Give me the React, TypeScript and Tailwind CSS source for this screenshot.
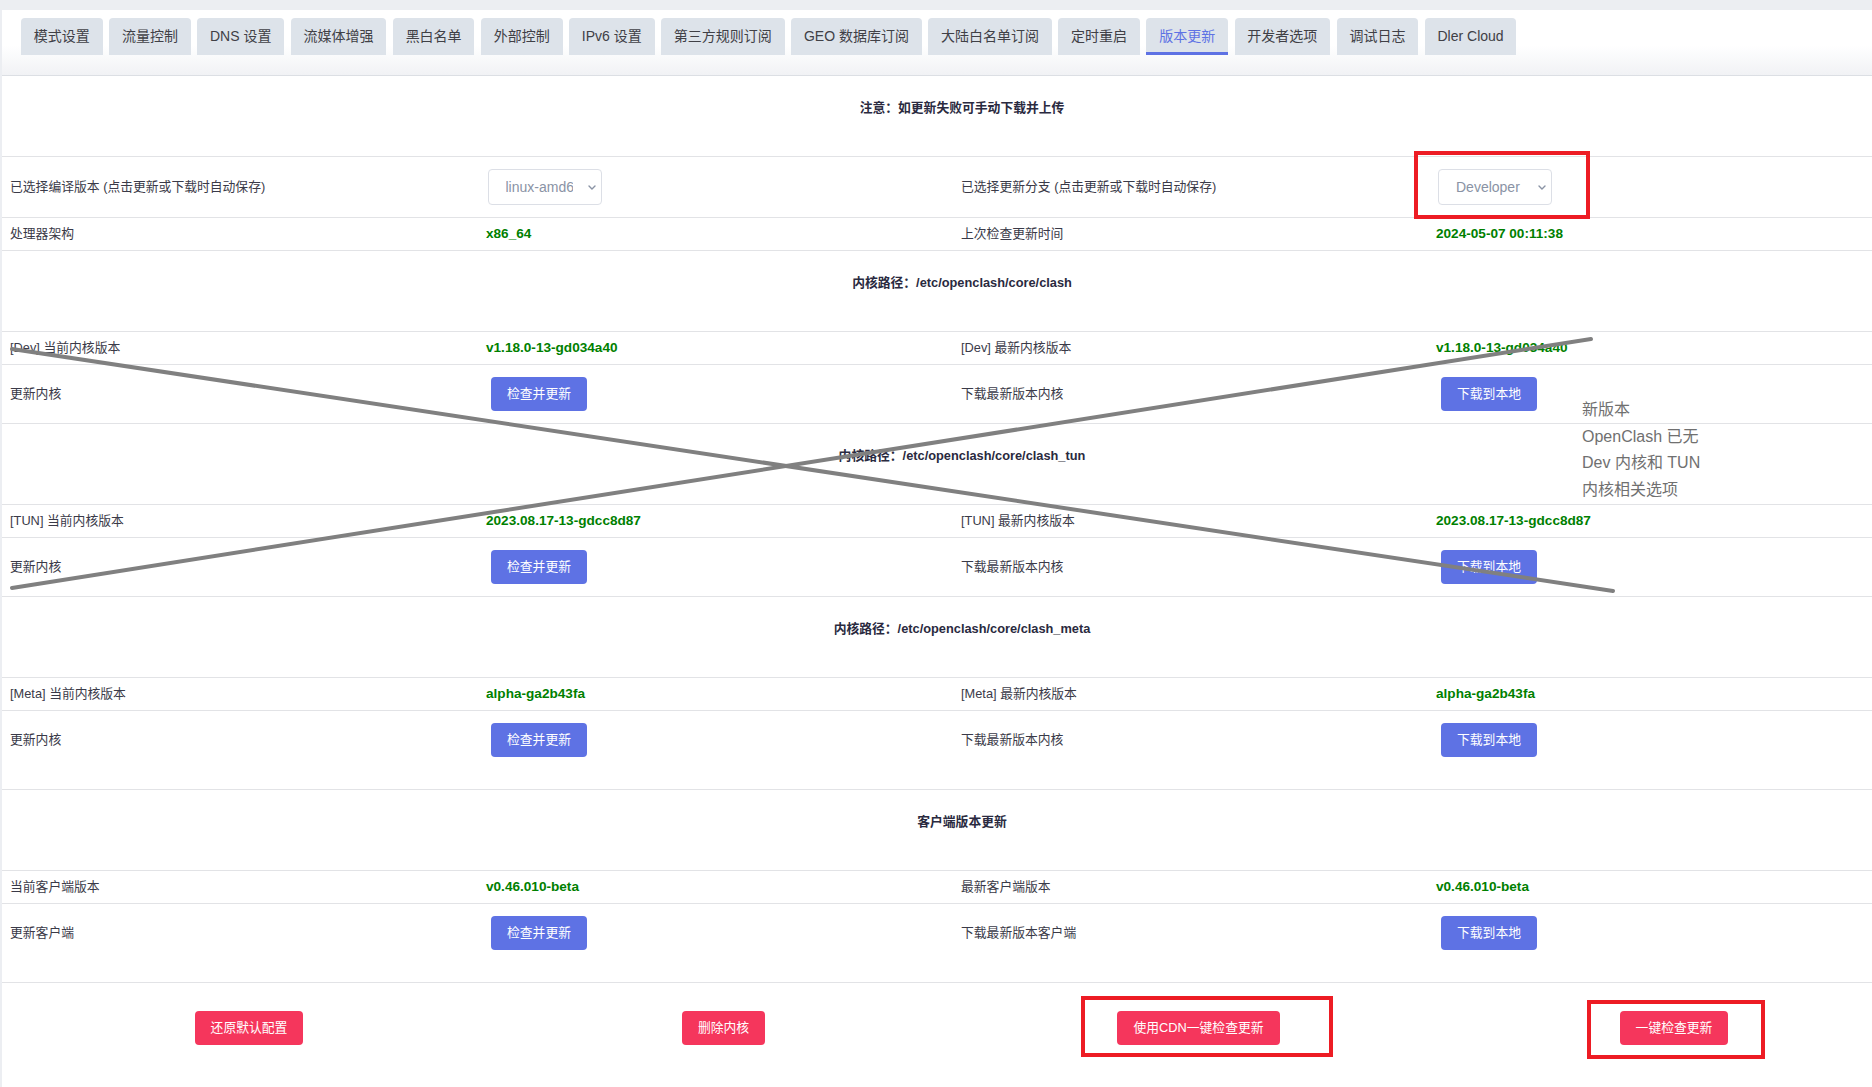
import type { ReactNode } from "react"
import clsx from "clsx"

const TABS = [
  "模式设置",
  "流量控制",
  "DNS 设置",
  "流媒体增强",
  "黑白名单",
  "外部控制",
  "IPv6 设置",
  "第三方规则订阅",
  "GEO 数据库订阅",
  "大陆白名单订阅",
  "定时重启",
  "版本更新",
  "开发者选项",
  "调试日志",
  "Dler Cloud",
]
const ACTIVE = "版本更新"

const COLS = "grid grid-cols-[474px_475px_475px_476px] border-b border-[#e2e3e6]"

function Label({ children }: { children: ReactNode }) {
  return <span className="text-[12.8px] text-[#3a3a48] whitespace-nowrap">{children}</span>
}

function Value({ children }: { children: ReactNode }) {
  return <span className="text-[13.6px] font-bold text-[#008000] whitespace-nowrap">{children}</span>
}

function Btn({ children, red }: { children: ReactNode; red?: boolean }) {
  return (
    <button
      className={clsx(
        "h-[34px] px-[16px] rounded-[4px] text-white text-[12.8px] whitespace-nowrap",
        red ? "bg-[#f5365c]" : "ml-[5px] bg-[#5e72e4]"
      )}
    >
      {children}
    </button>
  )
}

function FakeSelect({ text, className }: { text: string; className?: string }) {
  return (
    <div
      className={clsx(
        "w-[114px] h-[36px] border border-[#dcdfe6] rounded-[4px] bg-white flex items-center pl-[17px] pr-[5px] text-[14px] text-[#8a93a5]",
        className
      )}
    >
      <span className="w-[67px] overflow-hidden whitespace-nowrap">{text}</span>
      <svg width="8" height="5" viewBox="0 0 8 5" className="ml-auto">
        <path d="M1 1l3 3 3-3" fill="none" stroke="#8a93a5" strokeWidth="1.4" strokeLinecap="round" />
      </svg>
    </div>
  )
}

function Header({ children }: { children: ReactNode }) {
  return (
    <div className="h-[81px] border-b border-[#e2e3e6] pl-[20px] pt-[23px] text-center text-[12.8px] leading-[18px] font-bold text-[#2a2a40]">
      {children}
    </div>
  )
}

// plain label / value row
function Row({ cells, h = "h-[33px]" }: { cells: ReactNode[]; h?: string }) {
  return (
    <div className={clsx(COLS, h)}>
      {cells.map((c, i) => (
        <div key={i} className={clsx("flex items-center", i === 0 ? "pl-[8px]" : "pl-[10px]")}>
          {c}
        </div>
      ))}
    </div>
  )
}

// row with buttons, aligned to the top
function BtnRow({ cells, h }: { cells: ReactNode[]; h: string }) {
  return (
    <div className={clsx(COLS, h)}>
      {cells.map((c, i) => (
        <div key={i} className={clsx("pt-[12px]", i === 0 ? "pl-[8px]" : "pl-[10px]")}>
          <div className="h-[34px] flex items-center">{c}</div>
        </div>
      ))}
    </div>
  )
}

function KernelBlock({ tag, path, cur, latest, h }: { tag: string; path: string; cur: string; latest: string; h: string }) {
  return (
    <>
      <Header>内核路径：{path}</Header>
      <Row
        cells={[
          <Label>[{tag}] 当前内核版本</Label>,
          <Value>{cur}</Value>,
          <Label>[{tag}] 最新内核版本</Label>,
          <Value>{latest}</Value>,
        ]}
      />
      <BtnRow
        h={h}
        cells={[
          <Label>更新内核</Label>,
          <Btn>检查并更新</Btn>,
          <Label>下载最新版本内核</Label>,
          <Btn>下载到本地</Btn>,
        ]}
      />
    </>
  )
}

export default function App() {
  return (
    <div className="relative w-[1872px] h-[1087px] overflow-hidden bg-[#eceef2] pt-[10px] pl-[2px] font-['Liberation_Sans','Noto_Sans_CJK_SC',sans-serif]">
      <div className="w-[1900px] h-full bg-white rounded-tl-[5px]">
        {/* Tabs */}
        <div className="h-[66px] border-b border-[#dcdfe4] bg-linear-to-b from-white from-55% to-[#f1f2f5] pl-[19px] pt-[8px] flex items-start gap-[6.5px]">
          {TABS.map((t) => (
            <div
              key={t}
              className={clsx(
                "h-[37px] px-[12.8px] flex items-center rounded-t-[4px] bg-[#dde3ea] text-[14px] whitespace-nowrap",
                t === ACTIVE ? "text-[#5e72e4] border-b-[3px] border-[#5e72e4] pt-[3px]" : "text-[#404046]"
              )}
            >
              {t}
            </div>
          ))}
        </div>

        <Header>注意：如更新失败可手动下载并上传</Header>
        <Row
          h="h-[61px]"
          cells={[
            <Label>已选择编译版本 (点击更新或下载时自动保存)</Label>,
            <FakeSelect text="linux-amd64" className="ml-[1.5px]" />,
            <Label>已选择更新分支 (点击更新或下载时自动保存)</Label>,
            <FakeSelect text="Developer" className="ml-[2px]" />,
          ]}
        />
        <Row
          cells={[
            <Label>处理器架构</Label>,
            <Value>x86_64</Value>,
            <Label>上次检查更新时间</Label>,
            <Value>2024-05-07 00:11:38</Value>,
          ]}
        />

        <KernelBlock tag="Dev" path="/etc/openclash/core/clash" cur="v1.18.0-13-gd034a40" latest="v1.18.0-13-gd034a40" h="h-[59px]" />
        <KernelBlock tag="TUN" path="/etc/openclash/core/clash_tun" cur="2023.08.17-13-gdcc8d87" latest="2023.08.17-13-gdcc8d87" h="h-[59px]" />
        <KernelBlock tag="Meta" path="/etc/openclash/core/clash_meta" cur="alpha-ga2b43fa" latest="alpha-ga2b43fa" h="h-[79px]" />

        <Header>客户端版本更新</Header>
        <Row
          cells={[
            <Label>当前客户端版本</Label>,
            <Value>v0.46.010-beta</Value>,
            <Label>最新客户端版本</Label>,
            <Value>v0.46.010-beta</Value>,
          ]}
        />
        <BtnRow
          h="h-[79px]"
          cells={[
            <Label>更新客户端</Label>,
            <Btn>检查并更新</Btn>,
            <Label>下载最新版本客户端</Label>,
            <Btn>下载到本地</Btn>,
          ]}
        />

        {/* bottom actions */}
        <div className="grid grid-cols-[474px_475px_475px_476px]">
          {["还原默认配置", "删除内核", "使用CDN一键检查更新", "一键检查更新"].map((b) => (
            <div key={b} className="flex justify-center pl-[20px] pt-[28px]">
              <Btn red>{b}</Btn>
            </div>
          ))}
        </div>
      </div>

      {/* annotations drawn on top of the screenshot */}
      <svg className="absolute inset-0 pointer-events-none" width="1872" height="1087">
        <line x1="12" y1="349" x2="1613" y2="591" stroke="#808080" strokeWidth="4" strokeLinecap="round" />
        <line x1="12" y1="588" x2="1591" y2="339" stroke="#808080" strokeWidth="4" strokeLinecap="round" />
      </svg>
      <div className="absolute left-[1582px] top-[397px] text-[16px] leading-[26.7px] text-[#707070] whitespace-nowrap">
        <div>新版本</div>
        <div>OpenClash 已无</div>
        <div>Dev 内核和 TUN</div>
        <div>内核相关选项</div>
      </div>
      <div className="absolute left-[1414px] top-[151px] w-[176px] h-[68px] border-[4px] border-[#ed1c24]" />
      <div className="absolute left-[1081px] top-[996px] w-[252px] h-[61px] border-[4px] border-[#ed1c24]" />
      <div className="absolute left-[1587px] top-[1000px] w-[178px] h-[59px] border-[4px] border-[#ed1c24]" />
    </div>
  )
}
